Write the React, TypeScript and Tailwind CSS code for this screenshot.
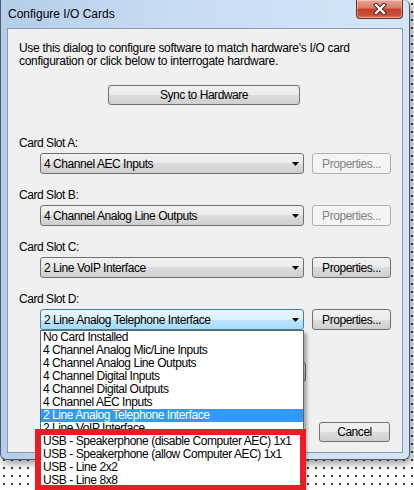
import clsx from "clsx";

const slots = [
  { label: "Card Slot A:", value: "4 Channel AEC Inputs", enabled: false },
  { label: "Card Slot B:", value: "4 Channel Analog Line Outputs", enabled: false },
  { label: "Card Slot C:", value: "2 Line VoIP Interface", enabled: true },
  { label: "Card Slot D:", value: "2 Line Analog Telephone Interface", enabled: true, focused: true },
];

const cardTypes = [
  "No Card Installed",
  "4 Channel Analog Mic/Line Inputs",
  "4 Channel Analog Line Outputs",
  "4 Channel Digital Inputs",
  "4 Channel Digital Outputs",
  "4 Channel AEC Inputs",
  "2 Line Analog Telephone Interface",
  "2 Line VoIP Interface",
  "USB - Speakerphone (disable Computer AEC) 1x1",
  "USB - Speakerphone (allow Computer AEC) 1x1",
  "USB - Line 2x2",
  "USB - Line 8x8",
];

const selected = 6;

function Button({
  children,
  disabled,
  className,
}: {
  children?: React.ReactNode;
  disabled?: boolean;
  className?: string;
}) {
  return (
    <div
      className={clsx(
        "flex items-center justify-center rounded-[3px] border",
        disabled
          ? "border-[#adb2b5] bg-[#f4f4f4] text-[#838383]"
          : "border-[#707070] bg-[linear-gradient(#f2f2f2,#ebebeb_50%,#dddddd_50%,#cfcfcf)] text-black",
        className
      )}
    >
      {children}
    </div>
  );
}

function Combo({ value, focused }: { value: string; focused?: boolean }) {
  return (
    <div
      className={clsx(
        "flex h-[21px] w-[264px] items-center justify-between rounded-[3px] border pl-[3px] pr-[4px]",
        focused
          ? "border-[#3c7fb1] bg-[linear-gradient(#eaf6fd,#d9f0fc_50%,#bee6fd_50%,#a7d9f5)]"
          : "border-[#707070] bg-[linear-gradient(#f2f2f2,#ebebeb_50%,#dddddd_50%,#cfcfcf)]"
      )}
    >
      <span>{value}</span>
      <svg width="7" height="4" viewBox="0 0 7 4">
        <path d="M0 0h7L3.5 4z" fill="#000" />
      </svg>
    </div>
  );
}

function CloseButton() {
  return (
    <div className="flex h-[19px] w-[47px] items-center justify-center rounded-b-[4px] border border-t-0 border-[#6e2d25] bg-[linear-gradient(#eba597,#d57a66_45%,#c43f2c_50%,#cf4d35_85%,#de7c5e)] shadow-[inset_0_0_0_1px_rgba(255,255,255,0.35)]">
      <svg width="14" height="12" viewBox="0 0 14 12">
        <path d="M3 2l8 8M11 2l-8 8" stroke="#4a2a26" strokeWidth="4.2" strokeLinecap="square" />
        <path d="M3 2l8 8M11 2l-8 8" stroke="#fff" strokeWidth="2.2" strokeLinecap="square" />
      </svg>
    </div>
  );
}

export default function App() {
  return (
    <div className="relative h-[490px] w-[414px] overflow-hidden bg-white bg-[radial-gradient(circle,#333_0.7px,transparent_0.9px)] bg-[length:8px_8px] font-['Liberation_Sans',Arial,sans-serif] text-[12px] tracking-[-0.45px] text-black">
      {/* dialog window */}
      <div className="flex h-[460px] w-[410px] flex-col rounded-b-[6px] rounded-tr-[6px] border border-t-0 border-[#4d5b6b] bg-[linear-gradient(90deg,#b4cde8,#c8dcf3_40%,#d4e5f8)] px-[6px] pb-[6px] shadow-[2px_3px_8px_rgba(0,0,0,0.45)]">
        <div className="flex h-[28px] items-center justify-between">
          <span className="pl-[1px] tracking-normal">Configure I/O Cards</span>
          <div className="self-start">
            <CloseButton />
          </div>
        </div>

        <div className="flex flex-1 flex-col border border-[#8b99a9] bg-[#f0f0f0] pl-[11px]">
          <p className="mt-[13px] leading-[13px] tracking-[-0.3px]">
            Use this dialog to configure software to match hardware's I/O card
            <br />
            configuration or click below to interrogate hardware.
          </p>

          <Button className="ml-[89px] mt-[17px] h-[20px] w-[192px]">Sync to Hardware</Button>

          <div className="mt-[17px] flex flex-col">
            {slots.map((slot) => (
              <div key={slot.label} className="mt-[14px] flex flex-col">
                <span className="leading-[14px]">{slot.label}</span>
                <div className="mt-[3px] flex items-center gap-[8px] pl-[21px]">
                  <Combo value={slot.value} focused={slot.focused} />
                  <Button disabled={!slot.enabled} className="h-[21px] w-[79px]">
                    Properties...
                  </Button>
                </div>
              </div>
            ))}
          </div>

          <Button className="ml-[212px] mt-[32px] h-[20px] w-[75px]">OK</Button>
          <Button className="ml-[300px] mt-[40px] h-[20px] w-[71px]">Cancel</Button>
        </div>
      </div>

      {/* open list of slot D */}
      <div className="absolute left-[40px] top-[330px] w-[264px] border border-[#646464] bg-white pb-[20px] shadow-[3px_3px_3px_rgba(0,0,0,0.3)]">
        {cardTypes.map((name, i) => (
          <div
            key={name}
            className={clsx(
              "h-[13px] whitespace-nowrap pl-[2px] leading-[13px]",
              i === selected ? "bg-[#3399ff] text-white" : "text-black"
            )}
          >
            {name}
          </div>
        ))}
      </div>

      {/* highlight box around the USB entries */}
      <div className="absolute left-[35px] top-[429px] h-[62px] w-[271px] border-[6px] border-[#ed1c24]" />
    </div>
  );
}
